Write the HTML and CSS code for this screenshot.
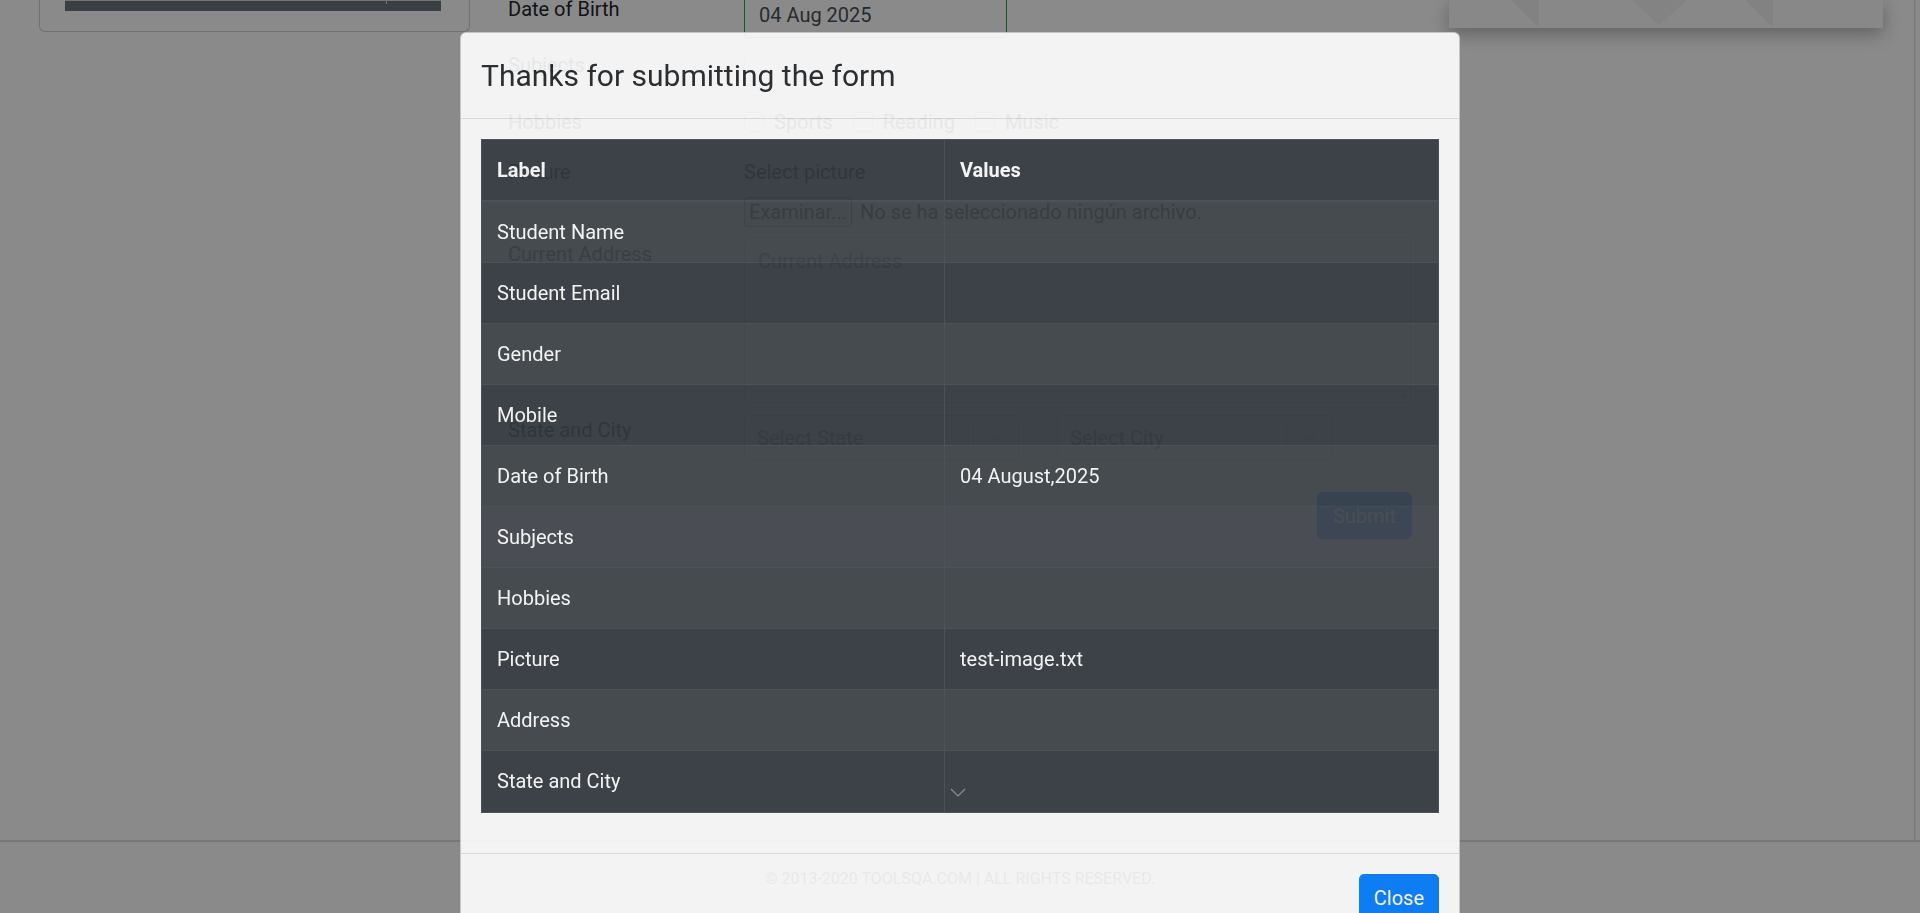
FILE: index.html
```html
<!DOCTYPE html>
<html lang="en">
<head>
<meta charset="utf-8">
<title>Practice Form</title>
<link rel="stylesheet" href="styles.css">
</head>
<body>
<div class="page">
  <div class="layout">
    <aside class="sidebar">
      <div class="side-card">
        <div class="side-item"><span class="side-item-left"></span></div>
      </div>
    </aside>

    <form class="practice-form">
      <div class="form-row row-dob">
        <label class="form-label">Date of Birth</label>
        <div class="form-field"><div class="date-input">04 Aug 2025</div></div>
      </div>
      <div class="form-row row-subjects">
        <label class="form-label">Subjects</label>
        <div class="form-field"><div class="subjects-input"></div></div>
      </div>
      <div class="form-row row-hobbies">
        <label class="form-label">Hobbies</label>
        <div class="form-field checks">
          <span class="check"><span class="check-box"></span>Sports</span>
          <span class="check"><span class="check-box"></span>Reading</span>
          <span class="check"><span class="check-box"></span>Music</span>
        </div>
      </div>
      <div class="form-row row-picture">
        <label class="form-label">Picture</label>
        <div class="form-field">
          <div class="sub-label">Select picture</div>
          <div class="file-input"><span class="file-btn">Examinar...</span><span class="file-text">No se ha seleccionado ningún archivo.</span></div>
        </div>
      </div>
      <div class="form-row row-address">
        <label class="form-label">Current Address</label>
        <div class="form-field">
          <div class="textarea">
            <span class="placeholder">Current Address</span>
            <svg class="resize" width="12" height="12" viewBox="0 0 12 12"><path d="M11 3 L3 11 M11 7 L7 11" stroke="#999" stroke-width="1" fill="none"/></svg>
          </div>
        </div>
      </div>
      <div class="form-row row-state">
        <label class="form-label">State and City</label>
        <div class="form-field selects">
          <div class="select">
            <span class="select-ph">Select State</span>
            <span class="select-sep"></span>
            <span class="select-arrow"><svg width="20" height="20" viewBox="0 0 20 20"><path d="M4.5 7.5 L10 13 L15.5 7.5" stroke="#ccc" stroke-width="1.6" fill="none"/></svg></span>
          </div>
          <div class="select">
            <span class="select-ph">Select City</span>
            <span class="select-sep"></span>
            <span class="select-arrow"><svg width="20" height="20" viewBox="0 0 20 20"><path d="M4.5 7.5 L10 13 L15.5 7.5" stroke="#ccc" stroke-width="1.6" fill="none"/></svg></span>
          </div>
        </div>
      </div>
      <div class="form-row row-submit">
        <div class="form-label"></div>
        <div class="form-field submit-field"><span class="btn-submit">Submit</span></div>
      </div>
    </form>

    <div class="ad-banner">
      <svg width="434" height="28" viewBox="0 0 434 28">
        <polygon points="62,0 90,0 90,28" fill="rgba(0,0,0,0.045)"/>
        <polygon points="183,0 238,0 210,26" fill="rgba(0,0,0,0.035)"/>
        <polygon points="296,0 324,0 324,28" fill="rgba(0,0,0,0.045)"/>
      </svg>
    </div>
    <div class="edge"></div>
  </div>

  <footer class="site-footer">
    <span>© 2013-2020 TOOLSQA.COM | ALL RIGHTS RESERVED.</span>
  </footer>
</div>

<div class="modal-backdrop"></div>

<div class="modal-dialog">
  <div class="modal-content">
    <div class="modal-header">
      <div class="modal-title">Thanks for submitting the form</div>
    </div>
    <div class="modal-body">
      <table class="result-table">
        <colgroup><col class="col-label"><col class="col-value"></colgroup>
        <thead>
          <tr><th>Label</th><th>Values</th></tr>
        </thead>
        <tbody>
          <tr><td>Student Name</td><td></td></tr>
          <tr><td>Student Email</td><td></td></tr>
          <tr><td>Gender</td><td></td></tr>
          <tr><td>Mobile</td><td></td></tr>
          <tr><td>Date of Birth</td><td>04 August,2025</td></tr>
          <tr class="is-hover"><td>Subjects</td><td></td></tr>
          <tr><td>Hobbies</td><td></td></tr>
          <tr><td>Picture</td><td>test-image.txt</td></tr>
          <tr><td>Address</td><td></td></tr>
          <tr><td>State and City</td><td><span class="chev"><svg width="16" height="9" viewBox="0 0 16 9"><path d="M1 1 L8 8 L15 1" stroke="#8d9297" stroke-width="1.1" fill="none"/></svg></span></td></tr>
        </tbody>
      </table>
    </div>
    <div class="modal-footer">
      <button type="button" class="btn-close">Close</button>
    </div>
  </div>
</div>
</body>
</html>
```
FILE: styles.css
```css
* { box-sizing: border-box; }

html, body {
  margin: 0;
  padding: 0;
}

body {
  width: 1920px;
  height: 913px;
  overflow: hidden;
  background: #fff;
  font-family: Roboto, "Noto Sans", "Liberation Sans", sans-serif;
  font-size: 20px;
  line-height: 30px;
  color: #212529;
  position: relative;
}

/* ---------- underlying page ---------- */
.page {
  height: 913px;
  display: flex;
  flex-direction: column;
}

.layout {
  display: flex;
  align-items: flex-start;
  height: 840px;
  flex: none;
}

.sidebar {
  margin-left: 39px;
  width: 431px;
  flex: none;
}

.side-card {
  height: 32px;
  border: 1px solid #cfcfcf;
  border-top: none;
  border-radius: 0 0 6px 6px;
  padding: 0 28px 0 25px;
}

.side-item {
  height: 11px;
  background: #6c757d;
  border-top: 1px solid #d6d6d6;
  display: flex;
}

.side-item-left {
  width: 322px;
  height: 3px;
  border-right: 1px solid #d6d6d6;
}

.practice-form {
  margin-left: 38px;
  width: 904px;
  flex: none;
}

.form-row {
  display: flex;
  align-items: flex-start;
}

.form-label {
  width: 236px;
  flex: none;
}

.form-field {
  width: 668px;
  flex: none;
}

.row-dob { margin-top: -10px; }
.row-dob .form-label { padding-top: 4px; }

.date-input {
  width: 263px;
  height: 48px;
  border: 1px solid #28a745;
  border-radius: 5px;
  background: #fff;
  padding: 9px 14px 0;
  color: #495057;
}

.row-subjects { margin-top: 11px; }
.row-subjects .form-label { padding-top: 1px; }

.subjects-input {
  width: 667px;
  height: 47px;
  border: 1px solid #ced4da;
  border-radius: 5px;
  background: #fff;
}

.row-hobbies { margin-top: 11px; height: 30px; }

.checks { display: flex; }

.check {
  display: flex;
  align-items: center;
  margin-right: 20px;
}

.check-box {
  width: 20px;
  height: 20px;
  border: 1px solid #adb5bd;
  border-radius: 5px;
  background: #fff;
  margin-right: 10px;
}

.row-picture { margin-top: 20px; }

.sub-label { height: 30px; }

.file-input {
  margin-top: 10px;
  height: 30px;
  display: flex;
  align-items: center;
}

.file-btn {
  width: 108px;
  height: 30px;
  border: 1px solid #767676;
  border-radius: 3px;
  background: #efefef;
  color: #000;
  display: flex;
  align-items: center;
  justify-content: center;
}

.file-text {
  margin-left: 8px;
  color: #000;
}

.row-address { margin-top: 10px; }
.row-address .form-label { padding-top: 2px; }

.textarea {
  width: 667px;
  height: 166px;
  border: 1px solid #ced4da;
  border-radius: 5px;
  background: #fff;
  padding: 8px 13px;
  display: flex;
  flex-direction: column;
  justify-content: space-between;
}

.placeholder { color: #6c757d; }

.resize {
  align-self: flex-end;
  margin-right: -11px;
  margin-bottom: -6px;
}

.row-state { margin-top: 12px; }

.selects {
  display: flex;
  gap: 38px;
}

.select {
  width: 275px;
  height: 46px;
  border: 1px solid #ccc;
  border-radius: 5px;
  background: #fff;
  display: flex;
  align-items: center;
  padding-left: 12px;
}

.select-ph {
  flex: 1;
  color: #808080;
}

.select-sep {
  width: 1px;
  height: 28px;
  background: #ccc;
}

.select-arrow {
  width: 44px;
  display: flex;
  justify-content: center;
}

.row-submit { margin-top: 31px; }

.submit-field {
  display: flex;
  justify-content: flex-end;
}

.btn-submit {
  height: 47px;
  padding: 8px 15px;
  background: #007bff;
  border: 1px solid #007bff;
  border-radius: 5px;
  color: #fff;
}

.ad-banner {
  margin-left: 37px;
  width: 434px;
  height: 28px;
  flex: none;
  background: #fcfcfc;
  box-shadow: 0 6px 18px rgba(0, 0, 0, 0.3);
}

.ad-banner svg { display: block; }

.edge {
  margin-left: 31px;
  width: 2px;
  height: 840px;
  flex: none;
  background: #f2f2f2;
  border-left: 1px solid #e4e4e4;
}

.site-footer {
  flex: 1;
  border-top: 2px solid #dcdcdc;
  background: #fff;
  text-align: center;
  padding-top: 24px;
  font-size: 16px;
  line-height: 26px;
  color: #3a3a3a;
}

/* ---------- modal ---------- */
.modal-backdrop {
  position: fixed;
  inset: 0;
  background: rgba(0, 0, 0, 0.46);
}

.modal-dialog {
  position: absolute;
  top: 32px;
  left: 460px;
  width: 1000px;
  opacity: 0.9;
}

.modal-content {
  background: #fff;
  border: 1px solid rgba(0, 0, 0, 0.2);
  border-radius: 6px;
}

.modal-header {
  padding: 20px;
  border-bottom: 1px solid #dee2e6;
}

.modal-title {
  font-size: 30px;
  line-height: 45px;
  font-weight: 400;
}

.modal-body { padding: 20px; }

.result-table {
  width: 100%;
  table-layout: fixed;
  border-collapse: collapse;
  background: #343a40;
  color: #fff;
  margin-bottom: 20px;
}

.col-label { width: 463px; }

.result-table th,
.result-table td {
  padding: 15px;
  border: 1px solid #454d55;
  text-align: left;
  vertical-align: top;
  line-height: 30px;
  height: 61px;
}

.result-table thead th {
  border-bottom-width: 2px;
  font-weight: 700;
  height: 60px;
}

.result-table tbody tr:nth-child(odd) { background: rgba(255, 255, 255, 0.05); }
.result-table tbody tr.is-hover { background: rgba(255, 255, 255, 0.075); }

.chev {
  display: flex;
  align-items: flex-end;
  height: 31px;
  margin-left: -10px;
}

.chev svg { display: block; }

.modal-footer {
  border-top: 1px solid #dee2e6;
  padding: 15px;
  display: flex;
  justify-content: flex-end;
}

.btn-close {
  margin: 5px;
  padding: 8px 14px;
  font-family: inherit;
  font-size: 20px;
  line-height: 30px;
  color: #fff;
  background: #007bff;
  border: 1px solid #007bff;
  border-radius: 5px;
}
```
